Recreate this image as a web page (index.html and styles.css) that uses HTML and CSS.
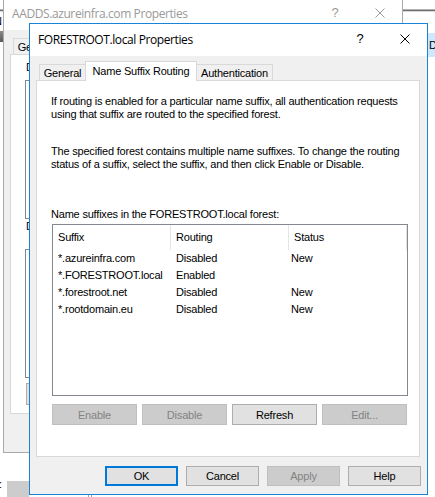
FILE: index.html
```html
<!DOCTYPE html>
<html lang="en">
<head>
<meta charset="utf-8">
<title>FORESTROOT.local Properties</title>
<link rel="stylesheet" href="styles.css">
</head>
<body>
<div class="desk">
  <div class="desk-toolbar"></div>
  <div class="desk-selrow">D</div>
  <div class="desk-n">N</div>
  <div class="desk-icon"></div>
  <div class="desk-colon">:</div>
  <div class="desk-status"></div>
  <div class="desk-sep"></div>
</div>

<section class="win win-back">
  <header class="titlebar titlebar-inactive">
    <span class="title">AADDS.azureinfra.com Properties</span>
    <span class="cap cap-help">?</span>
    <span class="cap cap-close"><svg class="x-icon" viewBox="0 0 10 10" width="10" height="10"><path d="M0.5 0.5L9.5 9.5M9.5 0.5L0.5 9.5"/></svg></span>
  </header>
  <div class="win-body">
    <div class="tabs">
      <span class="tab tab-first">General</span>
      <span class="tab tab-sel"></span>
    </div>
    <div class="panel panel-back">
      <div class="back-label">D</div>
      <div class="back-box back-box-1"></div>
      <div class="back-label back-label-2">D</div>
      <div class="back-box back-box-2"></div>
      <div class="back-btn"></div>
    </div>
  </div>
</section>

<section class="win win-front">
  <header class="titlebar">
    <span class="title">FORESTROOT.local Properties</span>
    <span class="cap cap-help">?</span>
    <span class="cap cap-close"><svg class="x-icon" viewBox="0 0 10 10" width="10" height="10"><path d="M0.5 0.5L9.5 9.5M9.5 0.5L0.5 9.5"/></svg></span>
  </header>
  <div class="win-body">
    <div class="tabs">
      <span class="tab tab-first">General</span>
      <span class="tab tab-sel">Name Suffix Routing</span>
      <span class="tab tab-last">Authentication</span>
    </div>
    <div class="panel panel-front">
      <p class="desc">If routing is enabled for a particular name suffix, all authentication requests<br>using that suffix are routed to the specified forest.</p>
      <p class="desc">The specified forest contains multiple name suffixes. To change the routing<br>status of a suffix, select the suffix, and then click Enable or Disable.</p>
      <p class="list-label">Name suffixes in the FORESTROOT.local forest:</p>
      <div class="listview">
        <div class="lv-head"><span>Suffix</span><span>Routing</span><span>Status</span></div>
        <div class="lv-row"><span>*.azureinfra.com</span><span>Disabled</span><span>New</span></div>
        <div class="lv-row"><span>*.FORESTROOT.local</span><span>Enabled</span><span></span></div>
        <div class="lv-row"><span>*.forestroot.net</span><span>Disabled</span><span>New</span></div>
        <div class="lv-row"><span>*.rootdomain.eu</span><span>Disabled</span><span>New</span></div>
      </div>
      <div class="btn-row">
        <button class="btn" disabled>Enable</button>
        <button class="btn" disabled>Disable</button>
        <button class="btn">Refresh</button>
        <button class="btn" disabled>Edit...</button>
      </div>
    </div>
    <div class="dlg-buttons">
      <button class="btn dlg-btn btn-default">OK</button>
      <button class="btn dlg-btn">Cancel</button>
      <button class="btn dlg-btn" disabled>Apply</button>
      <button class="btn dlg-btn">Help</button>
    </div>
  </div>
</section>
</body>
</html>
```
FILE: styles.css
```css
* { box-sizing: border-box; }
html, body { margin: 0; }
body {
  width: 435px;
  height: 497px;
  overflow: hidden;
  position: relative;
  background: #fff;
  font-family: "Liberation Sans", Arial, sans-serif;
  font-size: 11px;
  letter-spacing: -0.2px;
  color: #000;
}

/* desktop / windows behind */
.desk > div { position: absolute; }
.desk-toolbar {
  left: 0; top: 9px; width: 435px; height: 3px;
  background: linear-gradient(#b4b4b4 0 1px, #6e6e6e 1px 2px, #d8d8d8 2px 3px);
}
.desk-selrow {
  left: 380px; top: 33px; width: 55px; height: 24px;
  background: #cce8ff; padding-left: 49px; line-height: 24px;
}
.desk-n { left: -6px; top: 15px; line-height: 13px; }
.desk-icon { left: 0; top: 31px; width: 3px; height: 11px; background: linear-gradient(#8a8a8a, #5a5a5a); }
.desk-colon { left: -1px; top: 478px; line-height: 13px; }
.desk-status { left: 7px; top: 481px; width: 22px; height: 16px; background: #cccccc; }
.desk-sep { left: 88px; top: 495px; width: 4px; height: 2px; border-left: 1px solid #a0a0a0; border-right: 1px solid #a0a0a0; }

/* windows */
.win {
  position: absolute;
  display: flex;
  flex-direction: column;
  background: #f0f0f0;
}
.win-back { left: 3px; top: -3px; width: 400px; height: 456px; border: 1px solid #aaaaaa; z-index: 1; }
.win-front { left: 29px; top: 23px; width: 399px; height: 472px; border: 1px solid #1883d7; z-index: 2; }

.titlebar {
  flex: none;
  height: 32px;
  display: flex;
  align-items: center;
  background: #fff;
  padding-left: 8px;
  font-family: "Open Sans", "Noto Sans", sans-serif;
  font-size: 12px;
  letter-spacing: -0.4px;
}
.titlebar-inactive { color: #999999; }
.title { flex: 1; white-space: nowrap; padding-bottom: 1px; }
.cap {
  flex: none;
  height: 32px;
  display: flex;
  align-items: center;
  justify-content: center;
  padding-bottom: 3px;
}
.cap-help { width: 46px; font-family: "Liberation Sans", Arial, sans-serif; font-size: 13px; }
.cap-close { width: 44px; }
.x-icon path { stroke: currentColor; stroke-width: 1; fill: none; }

.win-body {
  flex: 1;
  display: flex;
  flex-direction: column;
  padding: 5px 7px 0 6px;
}

/* tabs */
.tabs {
  flex: none;
  display: flex;
  height: 20px;
  margin-left: 3px;
  position: relative;
  z-index: 1;
}
.tab {
  height: 16px;
  margin-top: 3px;
  display: flex;
  align-items: center;
  justify-content: center;
  white-space: nowrap;
  background: #f0f0f0;
  border: 1px solid #d9d9d9;
  border-bottom: none;
}
.tab-first { width: 46px; border-right: none; }
.tab-sel { width: 112px; height: 20px; margin-top: 0; background: #fff; padding-bottom: 1px; }
.tab-last { width: 76px; border-left: none; }

.panel {
  flex: none;
  height: 377px;
  margin-top: -1px;
  background: #fff;
  border: 1px solid #d9d9d9;
}

/* background dialog panel */
.panel-back { height: 360px; padding: 6px 0 0 14px; overflow: hidden; }
.back-label { line-height: 13px; white-space: nowrap; margin-left: 1px; }
.back-label-2 { margin-top: 1px; }
.back-box { width: 340px; border: 1px solid #828790; background: #fff; }
.back-box-1 { height: 139px; margin-top: 6px; }
.back-box-2 { height: 129px; margin-top: 16px; }
.back-btn { width: 75px; height: 22px; margin: 5px 0 0 1px; background: #e1e1e1; border: 1px solid #adadad; }

/* front dialog panel */
.panel-front { padding: 14px 0 0 14px; }
.desc { margin: 0; line-height: 13px; white-space: nowrap; }
.desc + .desc { margin-top: 24px; }
.list-label { margin: 37px 0 0; line-height: 13px; white-space: nowrap; }

.listview {
  width: 356px;
  height: 172px;
  margin: 3px 0 0 1px;
  border: 1px solid #828790;
  background: #fff;
}
.lv-head { display: flex; height: 25px; }
.lv-head span {
  width: 118px;
  line-height: 25px;
  padding-left: 5px;
  border-right: 1px solid #e5e5e5;
  white-space: nowrap;
}
.lv-row { display: flex; height: 17px; line-height: 17px; }
.lv-row span { width: 118px; padding-left: 5px; white-space: nowrap; }
.lv-row span:last-child { padding-left: 2px; }

.btn-row { display: flex; gap: 5px; margin: 8px 0 0 1px; }
.btn {
  width: 85px;
  height: 21px;
  margin: 0;
  padding: 0;
  font: inherit;
  letter-spacing: inherit;
  color: #000;
  background: #e1e1e1;
  border: 1px solid #adadad;
  border-radius: 0;
}
.btn:disabled { background: #cccccc; border-color: #bfbfbf; color: #838383; }

.dlg-buttons {
  display: flex;
  justify-content: flex-end;
  gap: 8px;
  margin: 9px -1px 0 0;
}
.dlg-btn { width: 73px; height: 20px; }
.btn-default { border: 2px solid #0078d7; }
```
